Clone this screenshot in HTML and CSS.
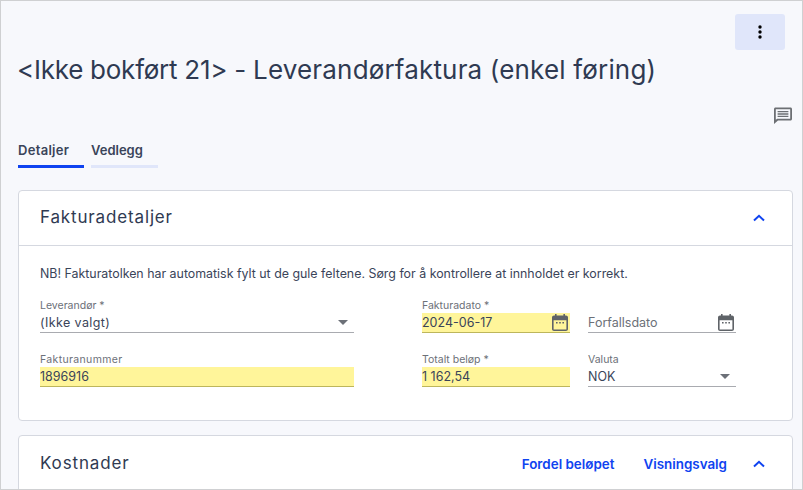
FILE: index.html
```html
<!DOCTYPE html>
<html lang="no">
<head>
<meta charset="utf-8">
<title>Leverandørfaktura</title>
<link rel="stylesheet" href="styles.css">
</head>
<body>
<div class="window">
  <div class="toolbar">
    <button class="more-btn" aria-label="Mer">
      <svg width="4" height="14" viewBox="0 0 4 14"><circle cx="2" cy="2" r="1.7"/><circle cx="2" cy="7" r="1.7"/><circle cx="2" cy="12" r="1.7"/></svg>
    </button>
  </div>
  <h1 class="title"><span class="title-a">&lt;Ikke bokført 21&gt; - </span><span class="title-b">Leverandørfaktura (enkel føring)</span></h1>
  <div class="comment-row">
    <svg class="comment-icon" width="18" height="17" viewBox="0 0 18 17"><path fill-rule="evenodd" d="M1.5 0.5H16.5C17.3 0.5 18 1.2 18 2V12C18 12.8 17.3 13.5 16.5 13.5H4L0 17V2C0 1.2 .7 .5 1.5 .5ZM1.8 2.3V12.7L3.3 11.7H16.2V2.3ZM3.6 3.9H14.4V5.3H3.6ZM3.6 6.3H14.4V7.7H3.6ZM3.6 8.7H14.4V10.1H3.6Z"/></svg>
  </div>
  <div class="tabs">
    <div class="tab tab-active">Detaljer</div>
    <div class="tab">Vedlegg</div>
  </div>
  <section class="card">
    <header class="card-head card-head-ruled">
      <h2 class="card-title">Fakturadetaljer</h2>
      <svg class="chevron" width="12" height="8" viewBox="0 0 12 8"><path d="M1 6.5L6 1.8L11 6.5" /></svg>
    </header>
    <div class="card-body">
      <p class="note">NB! Fakturatolken har automatisk fylt ut de gule feltene. Sørg for å kontrollere at innholdet er korrekt.</p>
      <div class="form-grid">
        <div class="field">
          <label class="field-label">Leverandør *</label>
          <div class="field-input"><span class="spaced">(Ikke valgt)</span><i class="caret"></i></div>
        </div>
        <div class="field field-mid">
          <label class="field-label">Fakturadato *</label>
          <div class="field-input filled"><span>2024-06-17</span>
            <svg class="cal" width="16" height="17" viewBox="0 0 16 17"><path fill-rule="evenodd" d="M3 0H4.6V1.6H11.4V0H13V1.6H14C15.1 1.6 16 2.5 16 3.6V15C16 16.1 15.1 17 14 17H2C.9 17 0 16.1 0 15V3.6C0 2.5 .9 1.6 2 1.6H3ZM1.6 6.2V15.4H14.4V6.2ZM4 8H5.6V9.6H4ZM7.2 8H8.8V9.6H7.2ZM10.4 8H12V9.6H10.4Z"/></svg>
          </div>
        </div>
        <div class="field">
          <label class="field-label">&nbsp;</label>
          <div class="field-input"><span class="placeholder">Forfallsdato</span>
            <svg class="cal" width="16" height="17" viewBox="0 0 16 17"><path fill-rule="evenodd" d="M3 0H4.6V1.6H11.4V0H13V1.6H14C15.1 1.6 16 2.5 16 3.6V15C16 16.1 15.1 17 14 17H2C.9 17 0 16.1 0 15V3.6C0 2.5 .9 1.6 2 1.6H3ZM1.6 6.2V15.4H14.4V6.2ZM4 8H5.6V9.6H4ZM7.2 8H8.8V9.6H7.2ZM10.4 8H12V9.6H10.4Z"/></svg>
          </div>
        </div>
        <div class="field">
          <label class="field-label label-wide">Fakturanummer</label>
          <div class="field-input filled"><span>1896916</span></div>
        </div>
        <div class="field field-mid">
          <label class="field-label">Totalt beløp *</label>
          <div class="field-input filled"><span>1 162,54</span></div>
        </div>
        <div class="field">
          <label class="field-label">Valuta</label>
          <div class="field-input"><span>NOK</span><i class="caret"></i></div>
        </div>
      </div>
    </div>
  </section>
  <section class="card card-costs">
    <header class="card-head">
      <h2 class="card-title">Kostnader</h2>
      <div class="card-actions">
        <a class="action">Fordel beløpet</a>
        <a class="action">Visningsvalg</a>
        <svg class="chevron chevron-tight" width="12" height="8" viewBox="0 0 12 8"><path d="M1 6.5L6 1.8L11 6.5" /></svg>
      </div>
    </header>
  </section>
</div>
</body>
</html>
```
FILE: styles.css
```css
* { box-sizing: border-box; }
html, body { margin: 0; height: 100%; overflow: hidden; }
body { font-family: Inter, "Noto Sans", sans-serif; color: #2f3a52; }
.window {
  height: 490px;
  background: #f7f8fc;
  border: 1px solid #cfd0d2;
  padding: 13px 9px 0 17px;
  overflow: hidden;
}
.toolbar { display: flex; justify-content: flex-end; padding-right: 8px; }
.more-btn {
  width: 50px; height: 36px; border: 0; border-radius: 3px; background: #e0e6fa;
  display: flex; align-items: center; justify-content: center; padding: 0;
}
.more-btn svg { fill: #000; display: block; }
.title { margin: 1px 0 0 -1px; font-size: 26px; line-height: 38px; font-weight: 400; }
.title-a { letter-spacing: -.25px; }
.title-b { letter-spacing: .17px; }
.comment-row { display: flex; justify-content: flex-end; margin-top: 18px; padding-right: 1px; height: 17px; }
.comment-icon { fill: #6c6f73; display: block; }
.tabs { display: flex; gap: 7px; margin-top: 18px; }
.tab {
  font-size: 13px; font-weight: 600; line-height: 16px; padding: 0 0 7px;
  border-bottom: 3px solid #e0e6fa; width: 67px; color: #3a4459;
}
.tab-active { border-bottom-color: #0f43f0; width: 66px; letter-spacing: .3px; }
.card { background: #fff; border: 1px solid #d5d8e0; border-radius: 4px; margin-top: 22px; }
.card-costs { margin-top: 14px; height: 80px; }
.card-head { display: flex; justify-content: space-between; align-items: center; height: 55px; padding: 0 27px 0 21px; }
.card-head-ruled { border-bottom: 1px solid #d5d8e0; }
.card-title { margin: 0 0 2px; font-size: 17px; font-weight: 400; color: #2f3a52; letter-spacing: .85px; }
.chevron { fill: none; stroke: #0f43f0; stroke-width: 2; display: block; }
.card-actions { display: flex; align-items: center; gap: 29px; }
.chevron-tight { margin-left: -3px; }
.action { font-size: 13.4px; font-weight: 600; color: #0f43f0; }
.card-body { padding: 20px 21px 33px; }
.note { margin: 0 0 17px; font-size: 12.4px; line-height: 16px; color: #3a4459; }
.form-grid { display: grid; grid-template-columns: 314px 198px 148px; column-gap: 18px; row-gap: 20px; }
.field-mid { margin-left: 50px; }
.field-label { display: block; font-size: 10.5px; line-height: 13px; margin-bottom: 1px; color: #6c7078; }
.label-wide { letter-spacing: .35px; }
.field-input {
  display: flex; justify-content: space-between; align-items: center;
  height: 20px; border-bottom: 1px solid #a9abb0; font-size: 12.5px; color: #3a4459;
}
.filled { background: #fff59a; border-bottom-color: #bdb65c; }
.spaced { letter-spacing: .4px; }
.placeholder { color: #6c7078; }
.caret { width: 0; height: 0; border-left: 5px solid transparent; border-right: 5px solid transparent; border-top: 5px solid #6c7078; margin-right: 6px; }
.cal { fill: #5f6368; margin-right: 2px; display: block; }
```
